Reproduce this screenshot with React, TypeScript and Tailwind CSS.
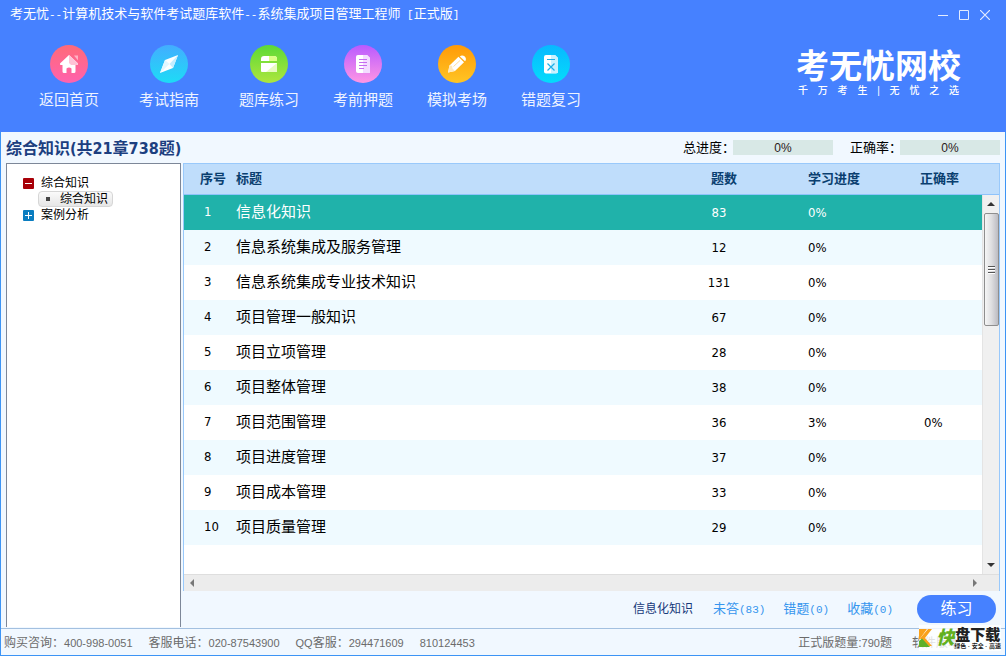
import React, { useState } from 'react';

type Chapter = {
    id: number;
    title: string;
    count: number;
    progress: string;
    accuracy?: string;
};

const chapters: Chapter[] = [
    { id: 1, title: '信息化知识', count: 83, progress: '0%' },
    { id: 2, title: '信息系统集成及服务管理', count: 12, progress: '0%' },
    { id: 3, title: '信息系统集成专业技术知识', count: 131, progress: '0%' },
    { id: 4, title: '项目管理一般知识', count: 67, progress: '0%' },
    { id: 5, title: '项目立项管理', count: 28, progress: '0%' },
    { id: 6, title: '项目整体管理', count: 38, progress: '0%' },
    { id: 7, title: '项目范围管理', count: 36, progress: '3%', accuracy: '0%' },
    { id: 8, title: '项目进度管理', count: 37, progress: '0%' },
    { id: 9, title: '项目成本管理', count: 33, progress: '0%' },
    { id: 10, title: '项目质量管理', count: 29, progress: '0%' },
];

const Disc: React.FC<{ id: string; from: string; to: string; children: React.ReactNode }> = ({ id, from, to, children }) => (
    <svg viewBox="0 0 38 38" className="w-[38px] h-[38px]" aria-hidden="true">
        <defs>
            <linearGradient id={id} x1="0" y1="0" x2="0" y2="1">
                <stop offset="0" stopColor={from} />
                <stop offset="1" stopColor={to} />
            </linearGradient>
        </defs>
        <circle cx="19" cy="19" r="19" fill={`url(#${id})`} />
        {children}
    </svg>
);

const HomeIcon = () => (
    <Disc id="home" from="#ff6a78" to="#ff62ae">
        <path d="M24 10.5h4v5z" fill="#ffb3c4" />
        <path d="M19 10 L10 18.5 Q9.6 20 11 20 H12.5 V26.5 Q12.5 28 14 28 H16.5 V23.5 Q19 21.5 21.5 23.5 V28 H24 Q25.5 28 25.5 26.5 V20 H27 Q28.4 20 28 18.5 Z" fill="#fff" />
        <path d="M19 10 L28 18.5 Q28.4 20 27 20 L21 20 L19 18 Z" fill="#ffc3d6" />
    </Disc>
);

const CompassIcon = () => (
    <Disc id="guide" from="#43adff" to="#1ddcf6">
        <path d="M28 10 L15 15 L10 28 L23 23 Z" fill="#fff" />
        <path d="M28 10 L19.5 19 L23 23 Z" fill="#c3edff" />
        <path d="M15 15 L19.5 19 L10 28 Z" fill="#e4f7ff" />
    </Disc>
);

const BankIcon = () => (
    <Disc id="bank" from="#5cd936" to="#aee63e">
        <path d="M11 16 V14 Q11 11 14 11 H24 Q27 11 27 14 V16 Z" fill="#fff" />
        <path d="M19 11 H24 Q27 11 27 14 V16 H19 Z" fill="#dcff86" />
        <path d="M11 18 H27 V26 Q27 27 26 27 H12 Q11 27 11 26 Z" fill="#fff" />
        <path d="M27 18 V26 Q27 27 26 27 H16 Z" fill="#e9fbc2" />
    </Disc>
);

const PaperIcon = () => (
    <Disc id="paper" from="#b95aff" to="#ff96e4">
        <path d="M14 10 H23 L26 13 V26 Q26 28 24 28 H14 Q12 28 12 26 V12 Q12 10 14 10 Z" fill="#fff" />
        <path d="M19 10 H23 L26 13 V28 H19 Z" fill="#f3dcff" />
        <path d="M15 14.5h8M15 17.5h8M15 20.5h8M15 23.5h5" stroke="#c66cf0" strokeWidth="1" />
    </Disc>
);

const PencilIcon = () => (
    <Disc id="exam" from="#ff9a08" to="#ffc524">
        <path d="M10 27.5 L11.5 20.5 L20.5 11.8 L26 17.2 L17 26 Z" fill="#fff" />
        <path d="M21.8 11.5 Q24 9.5 26.8 11.5 Q29 14.2 27 16.3 Z" fill="#fff" />
        <path d="M11.5 20.5 L14 20.8 L14.5 23.5 L17 26 L10 27.5 Z" fill="#ffe9bd" />
        <path d="M15.5 21.5 L22 15.5" stroke="#ffdf9c" strokeWidth="1" />
    </Disc>
);

const MistakeIcon = () => (
    <Disc id="mistake" from="#08b8ff" to="#04dcfb">
        <path d="M14 10 H23 L26 13 V26.5 Q26 28.5 24 28.5 H14 Q12 28.5 12 26.5 V12 Q12 10 14 10 Z" fill="#fff" />
        <path d="M19 10 H23 L26 13 V28 H19 Z" fill="#c9f1ff" />
        <path d="M15 14.5h8M15.5 18.5l7 7M22.5 18.5l-7 7" stroke="#1eaee8" strokeWidth="1.2" />
    </Disc>
);

const ToolButton: React.FC<{ label: string; children: React.ReactNode }> = ({ label, children }) => (
    <button type="button" className="flex flex-col items-center gap-[7px] w-[60px] whitespace-nowrap text-[15px] leading-5 text-[#eef3ff]">
        {children}
        {label}
    </button>
);

const ProgressBox: React.FC<{ label: string; value: string }> = ({ label, value }) => (
    <div className="flex items-center text-[13px] text-black">
        <span className="w-[50px] whitespace-nowrap">{label}</span>
        <div role="progressbar" aria-label={label} className="w-[100px] h-[15px] flex items-center justify-center bg-[#d8e8e6] text-xs text-[#2a2020]">
            {value}
        </div>
    </div>
);

const Mono: React.FC<{ children: React.ReactNode }> = ({ children }) => (
    <span className="font-['Liberation_Mono',monospace] text-[11px] whitespace-pre">{children}</span>
);

const Scrollbar = () => (
    <div className="flex-1 flex flex-col items-center bg-[#f0f0f0] border-l border-[#e4e4e4]">
        <svg viewBox="0 0 16 18" className="w-4 h-[18px]" aria-hidden="true">
            <path d="M4 11 L8 7 L12 11 Z" fill="#333" />
        </svg>
        <div className="w-[15px] h-[113px] flex flex-col items-center justify-center gap-px rounded-xs border border-[#8e8e8e] bg-linear-to-r from-[#f6f6f6] via-[#dedee0] to-[#bcbcc2]">
            <i className="w-[7px] h-0.5 bg-[#555] border-b border-white" />
            <i className="w-[7px] h-0.5 bg-[#555] border-b border-white" />
            <i className="w-[7px] h-0.5 bg-[#555] border-b border-white" />
        </div>
        <svg viewBox="0 0 16 18" className="w-4 h-[18px] mt-auto" aria-hidden="true">
            <path d="M4 7 L8 11 L12 7 Z" fill="#333" />
        </svg>
    </div>
);

const Header = () => (
    <header className="h-[132px] shrink-0 bg-[#4681ff] text-white">
        <div className="h-[30px] pl-2.5 pr-4 flex items-center justify-between">
            <h1 className="pb-0.5 text-[13px] leading-5 whitespace-nowrap">
                考无忧<Mono>--</Mono>计算机技术与软件考试题库软件<Mono>--</Mono>系统集成项目管理工程师<Mono> [</Mono>正式版<Mono>]</Mono>
            </h1>
            <div className="flex gap-[11px]">
                <button type="button" aria-label="最小化">
                    <svg viewBox="0 0 10 10" className="w-2.5 h-2.5"><path d="M0 5.5h10" stroke="#e3ecff" /></svg>
                </button>
                <button type="button" aria-label="最大化">
                    <svg viewBox="0 0 10 10" className="w-2.5 h-2.5"><path d="M.5 .5h9v9h-9z" fill="none" stroke="#e3ecff" /></svg>
                </button>
                <button type="button" aria-label="关闭">
                    <svg viewBox="0 0 10 10" className="w-2.5 h-2.5"><path d="M0 0l10 10M10 0L0 10" stroke="#e3ecff" strokeWidth="1.2" /></svg>
                </button>
            </div>
        </div>
        <div className="pt-[15px] pl-[39px] pr-[45px] flex justify-between items-start">
            <nav className="flex gap-[34px]">
                <div className="flex gap-10">
                    <ToolButton label="返回首页"><HomeIcon /></ToolButton>
                    <ToolButton label="考试指南"><CompassIcon /></ToolButton>
                    <ToolButton label="题库练习"><BankIcon /></ToolButton>
                </div>
                <ToolButton label="考前押题"><PaperIcon /></ToolButton>
                <ToolButton label="模拟考场"><PencilIcon /></ToolButton>
                <ToolButton label="错题复习"><MistakeIcon /></ToolButton>
            </nav>
            <div className="pt-1">
                <div className="text-[33px] leading-9 font-bold whitespace-nowrap">考无忧网校</div>
                <div className="px-0.5 flex justify-between text-[10px] leading-3 font-medium">
                    {'千万考生|无忧之选'.split('').map((char, i) => <span key={i}>{char}</span>)}
                </div>
            </div>
        </div>
    </header>
);

const Tree = () => (
    <aside className="w-[175px] shrink-0 mb-px pt-[11px] pl-4 bg-white border border-b-0 border-[#7d8798] text-xs leading-4 text-black">
        <ul>
            <li>
                <div className="flex items-center gap-[7px]">
                    <svg viewBox="0 0 11 11" className="w-[11px] h-[11px]" aria-hidden="true">
                        <rect width="11" height="11" rx="1" fill="#a80008" />
                        <path d="M2 5.5h7" stroke="#fff" />
                    </svg>
                    综合知识
                </div>
                <ul>
                    <li className="ml-[15px] w-[75px] h-4 pl-[7px] flex items-center gap-2.5 rounded-sm border border-[#d6d6d6] bg-linear-to-b from-[#fafafa] to-[#e6e6e6]">
                        <i className="w-1 h-1 bg-[#444]" />
                        综合知识
                    </li>
                </ul>
            </li>
            <li className="flex items-center gap-[7px]">
                <svg viewBox="0 0 11 11" className="w-[11px] h-[11px]" aria-hidden="true">
                    <rect width="11" height="11" rx="1" fill="#0a7dc0" />
                    <path d="M2 5.5h7M5.5 2v7" stroke="#fff" />
                </svg>
                案例分析
            </li>
        </ul>
    </aside>
);

const ChapterTable: React.FC<{ selected: number; onSelect: (id: number) => void }> = ({ selected, onSelect }) => (
    <div className="flex-1 flex flex-col border border-b-0 border-[#99c9fb]">
        <div className="flex-1 flex">
            <div className="flex-1 bg-white">
                <table className="w-full table-fixed border-separate border-spacing-0 text-left">
                    <colgroup>
                        <col className="w-[52px]" />
                        <col />
                        <col className="w-[92px]" />
                        <col className="w-[108px]" />
                        <col className="w-[84px]" />
                    </colgroup>
                    <thead>
                        <tr className="bg-[#bfddfb] text-[13px] text-[#0a3f70]">
                            <th className="h-[31px] border-b border-[#8ec3fb] pl-4">序号</th>
                            <th className="border-b border-[#8ec3fb]">标题</th>
                            <th className="border-b border-[#8ec3fb] pl-[13px]">题数</th>
                            <th className="border-b border-[#8ec3fb] pl-[18px]">学习进度</th>
                            <th className="border-b border-[#8ec3fb] pl-[22px]">正确率</th>
                        </tr>
                    </thead>
                    <tbody className="text-[13px] font-['DejaVu_Sans_Condensed','Noto_Sans_CJK_SC',sans-serif]">
                        {chapters.map((c) => (
                            <tr
                                key={c.id}
                                onClick={() => onSelect(c.id)}
                                className={c.id === selected ? 'h-[35px] bg-[#20b2aa] text-white' : 'h-[35px] text-black odd:bg-white even:bg-[#effaff]'}
                            >
                                <td className="pl-5 pb-0.5">{c.id}</td>
                                <td className="pb-0.5 text-[15px] leading-5">{c.title}</td>
                                <td className="pr-[50px] text-center">
                                    <div className="flex justify-center">{c.count}</div>
                                </td>
                                <td className="pl-[18px]">{c.progress}</td>
                                <td className="pl-[26px]">{c.accuracy}</td>
                            </tr>
                        ))}
                    </tbody>
                </table>
            </div>
            <div className="w-[17px] flex flex-col">
                <div className="h-[31px] bg-[#bfddfb] border-b border-[#8ec3fb]" />
                <Scrollbar />
            </div>
        </div>
        <div className="h-[17px] px-1 pr-5 flex items-center justify-between bg-[#ececec] border-t border-[#dedede]">
            <svg viewBox="0 0 8 8" className="w-2 h-2" aria-hidden="true"><path d="M6 0 L2 4 L6 8 Z" fill="#777" /></svg>
            <svg viewBox="0 0 8 8" className="w-2 h-2" aria-hidden="true"><path d="M2 0 L6 4 L2 8 Z" fill="#777" /></svg>
        </div>
    </div>
);

const Watermark = () => (
    <div className="absolute right-1 -top-1 h-[26px] flex items-center bg-white/80">
        <svg viewBox="0 0 17 18" className="w-[17px] h-[18px]" aria-hidden="true">
            <path d="M0 0h8L0 11z" fill="#f9a11b" />
            <path d="M9 0 H13 L6 9 L13 17 H10 L1 9.5 Z" fill="#f9a11b" />
            <path d="M0 18 V12 L3 9.5 L11 18 Z" fill="#5fb02a" />
        </svg>
        <span className="text-lg leading-5 font-black italic text-[#63b01e]">快</span>
        <div className="flex flex-col items-center font-black text-[#222]">
            <span className="text-[15px] leading-4">盘下载</span>
            <span className="text-[6px] leading-[6px] whitespace-nowrap font-bold">绿色 · 安全 · 高速</span>
        </div>
    </div>
);

const Footer = () => (
    <footer className="relative h-[27px] shrink-0 pt-0.5 pl-[3px] flex items-center justify-between border-t border-[#a3c0e0] text-xs text-[#6b6b6b] whitespace-nowrap">
        <div className="flex items-baseline gap-4">
            <span>购买咨询：<span className="text-[11px]">400-998-0051</span></span>
            <span>客服电话：<span className="text-[11px]">020-87543900</span></span>
            <span><span className="text-[11px]">QQ</span>客服：<span className="text-[11px]">294471609</span></span>
            <span className="text-[11px]">810124453</span>
        </div>
        <div className="flex gap-5 pr-[45px]">
            <span>正式版题量:<span className="text-[11px]">790</span>题</span>
            <span>软件版本</span>
        </div>
        <Watermark />
    </footer>
);

const App: React.FC = () => {
    const [selected, setSelected] = useState(1);
    const current = chapters.find((c) => c.id === selected);

    return (
        <div className="min-h-screen flex flex-col bg-[#f1f8ff] font-['Liberation_Sans','Noto_Sans_CJK_SC',sans-serif]">
            <Header />
            <div className="flex-1 flex flex-col border border-t-0 border-[#3c94f5]">
                <div className="h-[31px] px-[5px] flex items-center justify-between">
                    <h2 className="pt-0.5 text-base font-bold text-[#1c3f80] font-['DejaVu_Sans_Condensed','Noto_Sans_CJK_SC',sans-serif]">
                        综合知识(共21章738题)
                    </h2>
                    <div className="flex gap-[17px]">
                        <ProgressBox label="总进度：" value="0%" />
                        <ProgressBox label="正确率：" value="0%" />
                    </div>
                </div>
                <div className="flex-1 pl-[5px] flex gap-0.5">
                    <Tree />
                    <main className="flex-1 pr-[5px] flex flex-col">
                        <ChapterTable selected={selected} onSelect={setSelected} />
                        <div className="h-[37px] pr-1 pb-0.5 flex items-center justify-end text-[13px] text-[#3595ee]">
                            <span className="mr-5 text-xs text-[#16397a]">{current?.title}</span>
                            <div className="flex gap-[18px]">
                                <a href="#todo">未答<Mono>(83)</Mono></a>
                                <a href="#wrong">错题<Mono>(0)</Mono></a>
                                <a href="#saved">收藏<Mono>(0)</Mono></a>
                            </div>
                            <button type="button" className="ml-6 w-[79px] h-7 rounded-full bg-[#4681ff] text-base leading-7 text-white">练习</button>
                        </div>
                    </main>
                </div>
                <Footer />
            </div>
        </div>
    );
};

export default App;
